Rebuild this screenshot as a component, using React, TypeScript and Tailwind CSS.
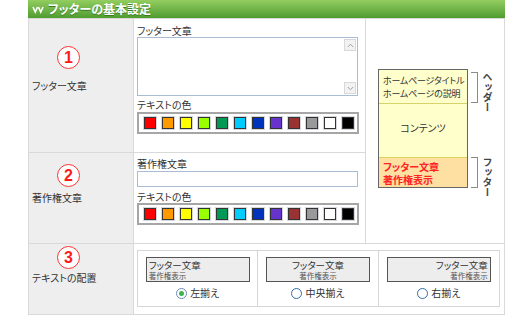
import React from 'react';

const swatchColors = [
  '#ff0000',
  '#ff9900',
  '#ffff00',
  '#99ff00',
  '#009955',
  '#00ccff',
  '#0033bb',
  '#6633cc',
  '#993333',
  '#999999',
  '#ffffff',
  '#000000',
];

const NumberBadge = ({ n }: { n: number }) => (
  <div className="w-[23px] h-[23px] rounded-full border-[1.5px] border-[#ff3030] bg-white flex items-center justify-center">
    <span className="font-['Liberation_Sans',sans-serif] font-bold text-[16px] leading-none text-[#ff1a1a]">{n}</span>
  </div>
);

const ColorPalette = () => (
  <div className="w-[222px] h-[22px] border-2 border-[#a6a6a6] bg-white flex items-center gap-[6px] pl-[5px]">
    {swatchColors.map((c) => (
      <div
        key={c}
        className="w-[12px] h-[12px] border border-[#333] shadow-[0_0_0_1px_#d4d8dc]"
        style={{ backgroundColor: c }}
      />
    ))}
  </div>
);

const Radio = ({ checked, label }: { checked?: boolean; label: string }) => (
  <div className="flex items-center justify-center gap-[3px] h-[12px]">
    <div
      className={`w-[11px] h-[11px] rounded-full bg-white border flex items-center justify-center ${
        checked ? 'border-[#6d8fb3]' : 'border-[#2f6fb0]'
      }`}
    >
      {checked && <div className="w-[5px] h-[5px] rounded-full bg-[#3bb54a]" />}
    </div>
    <span className="text-[10px] leading-[12px] text-[#333]">{label}</span>
  </div>
);

const AlignOption = ({ align, label, checked }: { align: 'left' | 'center' | 'right'; label: string; checked?: boolean }) => {
  const alignClass = align === 'left' ? 'text-left' : align === 'center' ? 'text-center' : 'text-right';
  return (
    <div className="flex flex-col items-center pt-[6px]">
      <div className={`w-[104px] h-[25px] border border-[#555] bg-[#ededed] px-[2px] pt-[2px] ${alignClass}`}>
        <div className="text-[9.5px] leading-[11px] text-[#333]">フッター文章</div>
        <div className="text-[7.5px] leading-[10px] text-[#555]">著作権表示</div>
      </div>
      <div className="mt-[5px]">
        <Radio checked={checked} label={label} />
      </div>
    </div>
  );
};

const Bracket = () => <div className="w-[7px] h-[31px] border-t border-r border-b border-[#8a8a8a]" />;

const App = () => {
  return (
    <div className="w-[525px] h-[321px] bg-white pl-[28px] font-['Noto_Sans_CJK_JP',sans-serif] [font-feature-settings:'palt'] text-[#333]">
      {/* header */}
      <div className="w-[477px] h-[18px] bg-gradient-to-b from-[#93cd60] to-[#4f9c30] flex items-center pl-[4px] gap-[4px]">
        <svg width="12" height="9" viewBox="0 0 12 9">
          <path d="M1 2 L3.3 7 L5.6 2" stroke="#fff" strokeWidth="1.6" fill="none" />
          <path d="M6.4 2 L8.7 7 L11 2" stroke="#fff" strokeWidth="1.6" fill="none" />
        </svg>
        <span className="text-white font-bold text-[12px] leading-none [text-shadow:0_1px_0_#3a7a20]">フッターの基本設定</span>
      </div>

      {/* table */}
      <div className="w-[477px] grid grid-cols-[104px_231px_138px] grid-rows-[133px_90px_70px] gap-px p-px bg-[#d9d9d9]">
        {/* row 1 left */}
        <div className="bg-[#eeeeee] pl-[3px] pt-[27px] flex flex-col">
          <div className="ml-[25px]">
            <NumberBadge n={1} />
          </div>
          <div className="mt-[11px] text-[10px] leading-[12px]">フッター文章</div>
        </div>

        {/* row 1 middle */}
        <div className="bg-white pl-[3px] pt-[6px] flex flex-col">
          <div className="text-[10px] leading-[12px]">フッター文章</div>
          <div className="w-[221px] h-[59px] border border-[#a9bcd3] bg-white flex justify-end">
            <div className="w-[12px] flex flex-col justify-between py-[1px] mr-px">
              <div className="h-[12px] bg-[#f2f2f2] border border-[#d8d8d8] flex items-center justify-center">
                <svg width="7" height="5" viewBox="0 0 7 5">
                  <path d="M0.8 4 L3.5 1.2 L6.2 4" stroke="#a0a0a0" strokeWidth="1" fill="none" />
                </svg>
              </div>
              <div className="h-[12px] bg-[#f2f2f2] border border-[#d8d8d8] flex items-center justify-center">
                <svg width="7" height="5" viewBox="0 0 7 5">
                  <path d="M0.8 1 L3.5 3.8 L6.2 1" stroke="#a0a0a0" strokeWidth="1" fill="none" />
                </svg>
              </div>
            </div>
          </div>
          <div className="mt-[3px] text-[10px] leading-[12px]">テキストの色</div>
          <div className="mt-[1px]">
            <ColorPalette />
          </div>
        </div>

        {/* right preview spanning rows 1-2 */}
        <div className="row-span-2 bg-white pl-[12px] pt-[50px] flex items-start">
          <div className="w-[90px] border border-[#666] flex flex-col">
            <div className="h-[34px] bg-[#ffffcc] border-b border-[#d4d46a] pl-[4px] pt-[4px] text-[9px] leading-[13px] tracking-[-0.2px] whitespace-nowrap text-[#333]">
              <div>ホームページタイトル</div>
              <div>ホームページの説明</div>
            </div>
            <div className="h-[54px] bg-[#ffffcc] border-b border-[#e0d060] flex items-center justify-center pb-[6px] text-[10px]">
              コンテンツ
            </div>
            <div className="h-[29px] bg-[#ffe0a3] pl-[4px] pt-[2px] text-[10px] leading-[13px] font-bold text-[#ff2222]">
              <div>フッター文章</div>
              <div>著作権表示</div>
            </div>
          </div>
          <div className="ml-[3px] pt-[3px] flex flex-col">
            <div className="h-[85px] flex items-start">
              <Bracket />
              <div className="ml-[4px] [writing-mode:vertical-rl] text-[10px] leading-[10px] font-bold text-[#444]">ヘッダー</div>
            </div>
            <div className="flex items-start">
              <Bracket />
              <div className="ml-[4px] [writing-mode:vertical-rl] text-[10px] leading-[10px] font-bold text-[#444]">フッター</div>
            </div>
          </div>
        </div>

        {/* row 2 left */}
        <div className="bg-[#eeeeee] pl-[3px] pt-[11px] flex flex-col">
          <div className="ml-[25px]">
            <NumberBadge n={2} />
          </div>
          <div className="mt-[5px] text-[10px] leading-[12px]">著作権文章</div>
        </div>

        {/* row 2 middle */}
        <div className="bg-white pl-[3px] pt-[5px] flex flex-col">
          <div className="text-[10px] leading-[12px]">著作権文章</div>
          <div className="mt-[1px] w-[221px] h-[16px] border border-[#a9bcd3] bg-white" />
          <div className="mt-[4px] text-[10px] leading-[12px]">テキストの色</div>
          <ColorPalette />
        </div>

        {/* row 3 left */}
        <div className="bg-[#eeeeee] pl-[3px] pt-[2px] flex flex-col">
          <div className="ml-[25px]">
            <NumberBadge n={3} />
          </div>
          <div className="mt-[3px] text-[10px] leading-[12px]">テキストの配置</div>
        </div>

        {/* row 3 options */}
        <div className="col-span-2 bg-white pl-[3px] pt-[6px]">
          <div className="w-[363px] h-[57px] border border-[#d6d6d6] grid grid-cols-3 divide-x divide-[#d6d6d6]">
            <AlignOption align="left" label="左揃え" checked />
            <AlignOption align="center" label="中央揃え" />
            <AlignOption align="right" label="右揃え" />
          </div>
        </div>
      </div>
    </div>
  );
};

export default App;
